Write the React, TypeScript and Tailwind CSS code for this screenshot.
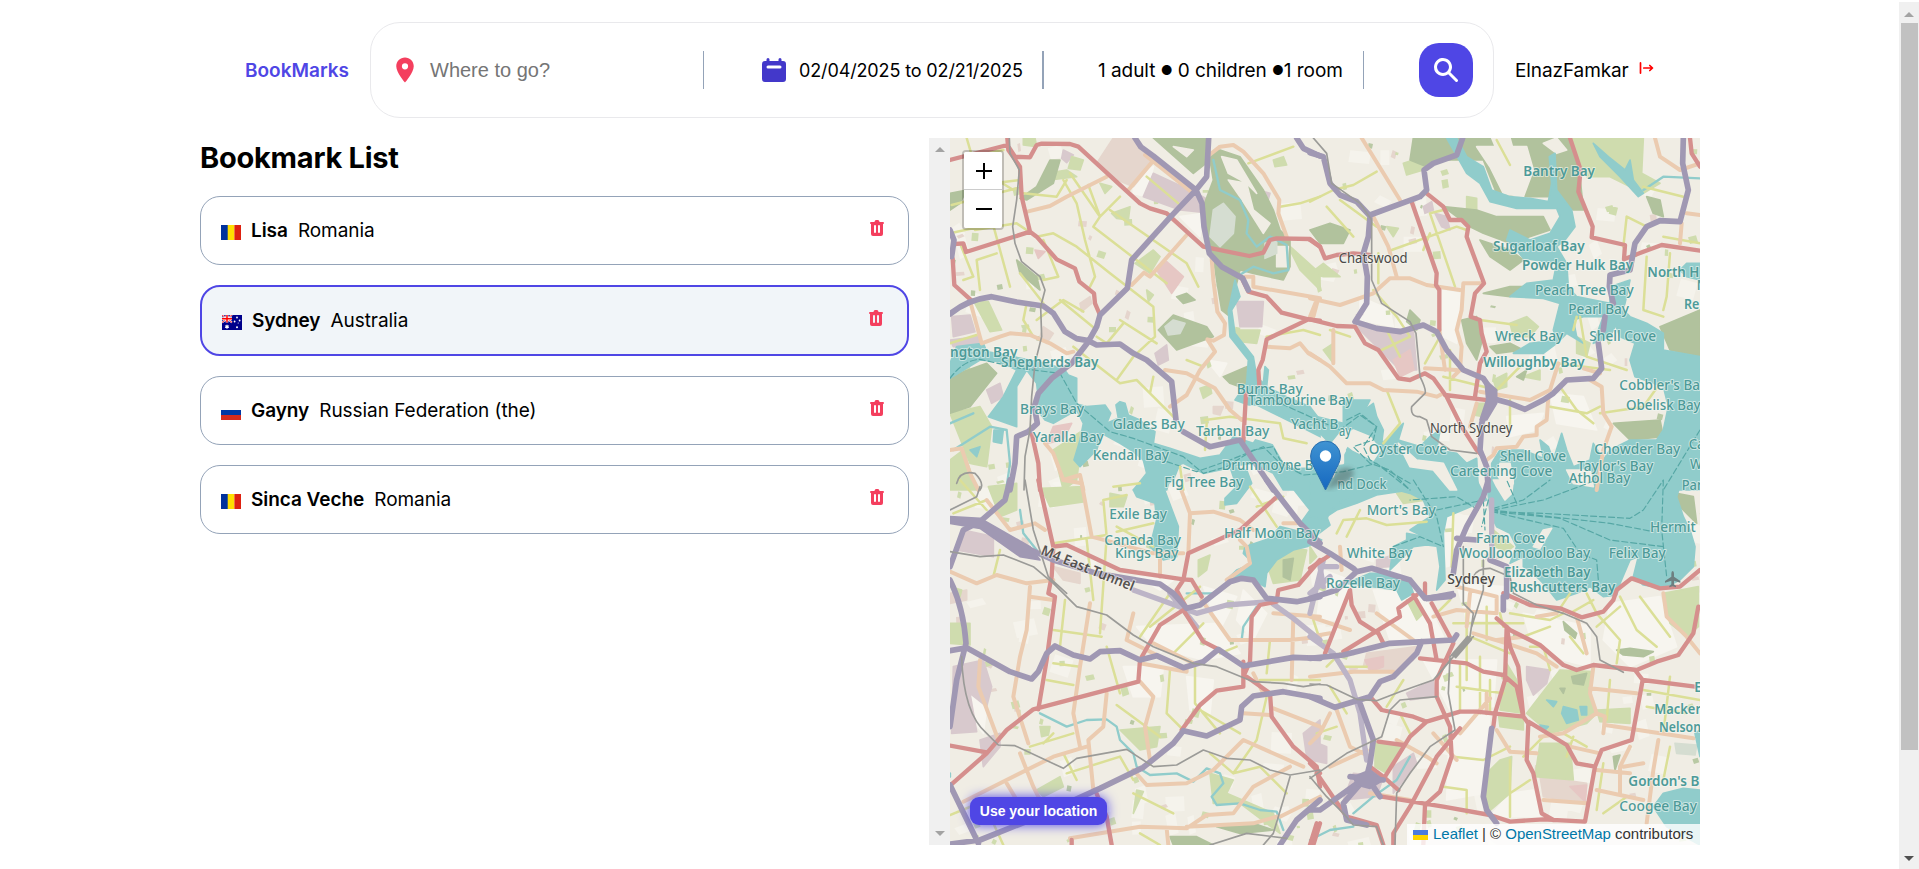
import React from "react";
import { HiCalendar, HiSearch, HiTrash } from "react-icons/hi";
import { MdLocationOn } from "react-icons/md";

type Quad = "a" | "b" | "c" | "d" | "e";
type Shape = [Quad, string];

/* Map sheets: every shape is stored relative to the origin of its sheet. */
const ORIGIN: Record<Quad, [number, number]> = {
  a: [0, 0],
  b: [1170, 0],
  c: [0, 1050],
  d: [1170, 1050],
  e: [630, 810],
};

const INDUSTRIAL: Shape[] = [
  ["a", "M670 200L700 130L830 190L900 230L880 250L780 240ZM95 560L150 555L165 605L100 620ZM950 515L1030 515L1025 590L960 590ZM885 350L970 380L940 410L880 390ZM430 60L460 75L440 98L425 85ZM1015 180L1050 190L1040 225L1010 215ZM705 670L740 645L745 690L715 705ZM90 630L175 620L180 650L100 650ZM200 780L240 760L250 800L215 820Z"],
  ["b", "M140 590L310 600L320 720L270 720L210 660ZM375 250L410 260L420 300L395 290ZM340 230L365 215L370 240L345 250Z"],
  ["c", "M130 150L220 170L220 230L110 210ZM100 560L190 540L215 620L200 680L150 640L170 755L95 760ZM180 780L240 760L240 800L190 860ZM1150 760L1200 720L1200 840L1160 830Z"],
  ["d", "M650 560L720 570L710 610L670 645L650 600ZM250 860L310 820L320 850L250 940ZM0 780L50 800L50 850L0 840ZM290 640L370 600L375 650L300 660ZM200 240L250 225L240 260L200 262ZM130 880L220 890L200 950L100 960Z"],
];
const RETAIL: Shape[] = [
  ["a", "M530 100L580 24L650 24L700 95L640 170L570 140ZM370 590L400 610L380 640L360 620ZM480 520L510 500L515 520L485 545ZM880 830L910 830L900 855L880 850Z"],
  ["d", "M690 890L830 910L825 970L700 950ZM170 520L320 500L310 540L250 580L160 560ZM700 150L725 150L700 200L680 190Z"],
  ["c", "M90 340L140 330L140 360L90 370ZM400 260L480 280L480 310L430 300Z"],
];
const PINK: Shape[] = [
  ["a", "M710 420L740 395L790 440L755 490ZM345 360L375 365L355 385ZM400 890L455 880L430 930L380 940Z"],
  ["b", "M250 690L300 660L312 720L270 740Z"],
  ["d", "M165 540L220 530L220 560L180 575ZM780 920L830 915L825 965Z"],
];
const PARK: Shape[] = [
  ["a", "M160 512L205 515L245 600L210 605ZM645 400L700 360L720 380L690 430ZM575 250L630 230L625 270L590 265ZM310 24L345 24L350 50L310 45ZM455 80L490 90L480 120L445 115ZM840 775L870 765L875 790L850 805ZM1060 90L1090 80L1100 105L1065 110ZM90 990L130 960L170 1080L90 1080ZM90 850L180 830L215 890L200 1010L150 1000ZM380 130L440 120L470 140L390 150ZM940 600L1020 600L1010 640L960 635ZM400 960L490 900L470 1050L430 1080ZM540 160L575 170L555 190ZM680 480L700 495L685 515ZM1100 340L1200 430L1200 480L1140 420Z"],
  ["b", "M780 24L1000 24L995 130L1050 160L1000 190L900 140L830 140ZM280 100L340 80L340 120L290 135ZM470 200L500 205L500 240L470 240ZM600 580L650 560L685 590L660 620L610 620ZM800 620L840 640L830 680L800 670ZM550 750L590 730L590 770L560 780ZM500 820L530 820L520 860L490 855ZM0 430L40 400L90 440L40 440ZM40 660L70 640L70 700ZM230 290L265 295L250 320ZM640 740L690 720L690 750Z"],
  ["c", "M365 25L490 20L495 65L390 80ZM1040 250L1090 200L1160 210L1140 300L1060 310ZM600 750L720 740L710 800L660 810ZM870 880L940 900L920 940L1060 1000L1080 1060L960 970L880 970ZM205 20L290 10L290 90L240 110ZM90 430L150 430L150 495L90 490ZM570 40L620 50L610 80L570 80ZM835 240L870 225L860 270L835 290ZM90 320L125 330L120 350ZM360 740L390 740L385 765L365 770ZM650 930L670 935L640 1000ZM350 930L420 890L430 920L370 950Z"],
  ["d", "M750 570L850 575L840 640L860 700L830 730L720 760L650 700ZM590 550L620 600L640 700L570 690ZM690 790L780 790L790 900L675 890ZM570 840L605 830L600 940L530 1000L530 880ZM1060 340L1165 320L1165 440L1130 470L1080 430ZM860 690L960 685L960 730L870 725ZM195 790L280 790L230 880L195 860ZM565 700L640 710L640 750L570 740ZM550 150L610 200L590 215L555 200ZM290 360L320 355L340 400L320 420ZM880 10L910 10L905 80L885 60ZM900 0L920 0L905 40ZM260 40L350 20L350 60L280 70ZM0 200L20 230L0 250Z"],
];
const FOREST: Shape[] = [
  ["a", "M700 24L860 24L860 75L900 60L960 80L1030 180L1060 240L1080 300L1110 330L1110 410L1090 450L1000 430L960 420L940 500L930 560L905 540L890 450L880 380L860 300L850 230L880 150L870 90L820 130ZM715 600L760 555L860 590L880 620L770 660ZM910 740L980 710L985 780L930 760ZM90 740L200 700L230 730L150 830L90 850ZM390 90L420 90L400 160L320 210L300 205L350 170ZM770 500L800 490L825 510L790 520ZM90 190L140 180L120 220L90 240ZM290 390L350 440L360 480L300 430Z"],
  ["b", "M310 24L780 24L810 140L820 240L790 240L740 200L660 200L560 190L520 90L400 90L350 110L300 90ZM400 230L500 240L560 260L700 260L720 300L600 340L520 310L480 290ZM510 330L600 360L640 390L600 420L540 380ZM455 570L500 560L520 620L500 690L470 640ZM520 490L600 470L640 470L600 500ZM1050 590L1170 540L1170 680L1080 660ZM0 300L60 280L120 300L100 340L30 340ZM910 880L1050 870L1060 920L960 930ZM1010 200L1050 210L1060 260L1030 250ZM300 540L330 570L320 600L290 575ZM540 650L600 640L640 660L560 670ZM620 740L650 720L640 750Z"],
  ["c", "M750 1070L830 1070L880 1095L760 1095ZM890 1040L1000 1030L1060 1050L960 1060ZM1090 240L1120 235L1110 300L1090 290Z"],
  ["d", "M920 510L960 505L1030 515L1000 530L940 525ZM785 590L830 580L820 615L790 610ZM750 625L765 625L760 640ZM760 425L800 460L795 475L765 450ZM910 830L930 825L915 870ZM1100 40L1150 50L1160 130L1110 80Z"],
];
const CLEARING: Shape[] = [
  ["a", "M925 150L980 160L1000 240L1050 280L1030 310L960 200ZM1070 350L1105 350L1100 410L1070 410ZM760 50L820 60L800 80ZM905 80L950 90L1010 190L980 160L925 130Z"],
  ["b", "M500 50L650 50L670 120L640 200L580 190L540 110ZM545 24L600 24L610 60L560 60ZM700 40L740 24L770 60L740 70Z"],
];
const PITCH: Shape[] = [
  ["a", "M880 240L910 220L945 260L940 310L900 350L870 320ZM735 590L760 570L795 580L780 610L745 615ZM1035 340L1070 330L1070 370L1035 385Z"],
  ["d", "M1095 790L1160 795L1155 825L1100 820Z"],
];
const PALE: Shape[] = [
  ["a", "M640 150L700 110L680 200L640 190ZM780 260L850 250L840 320ZM860 690L920 700L900 740ZM180 720L230 730L160 820L150 760Z"],
  ["c", "M400 10L460 0L440 40ZM650 290L760 300L720 330ZM850 320L950 350L900 450ZM120 540L200 680L190 760L140 700ZM800 590L880 600L870 700L810 690ZM970 330L1040 400L1000 480L950 420ZM650 440L900 430L960 520L850 540L700 500ZM610 560L730 560L720 650L640 650Z"],
  ["d", "M400 120L430 90L440 250L410 260ZM340 540L560 540L550 680L420 690ZM420 700L540 700L520 940L410 960ZM190 330L340 340L400 470L240 480ZM440 310L580 320L560 420L470 420ZM640 400L840 440L840 560L760 540L660 470ZM900 370L1050 350L1100 500L960 560L880 480ZM40 270L120 300L90 420L20 420ZM670 930L690 1010L540 1010L600 940Z"],
  ["b", "M390 480L450 490L440 640L400 620ZM590 860L700 850L680 900L600 920ZM720 790L820 800L860 900L740 880ZM150 500L240 540L250 590L150 570Z"],
];

const WATER: Shape[] = [
  ["a", "M90 700L110 650L190 640L200 665L330 690L430 715L445 735L470 745L470 822L500 830L555 825L572 850L560 880L595 865L588 825L600 815L615 820L625 855L660 870L680 890L705 905L700 940L750 955L840 985L900 975L940 920L1000 940L1020 910L1060 900L1110 950L1140 1000L1200 1010L1200 1080L1090 1080L1060 1030L1000 1000L960 1005L900 1020L850 1030L790 1000L760 1010L740 1080L640 1080L680 1030L670 990L640 965L600 940L545 910L530 960L480 1010L462 990L480 930L490 880L470 840L400 880L375 870L360 850L350 760L320 720L290 770L290 890L205 860L250 800L290 720L240 695L180 690L90 745Z"],
  ["a", "M930 520L945 450L960 500L935 540L945 610L1000 680L1010 740L1030 760L1035 710L1045 720L1040 770L1100 800L1170 830L1200 870L1200 930L1150 930L1120 890L1080 860L1000 830L945 810L980 760L985 690L930 620L925 540Z"],
  ["a", "M222 900L250 900L245 940L220 935ZM150 960L180 950L170 980Z"],
  ["e", "M300 200L350 210L365 250L320 310L285 315L285 295L320 260Z"],
  ["e", "M60 190L110 200L150 190L130 240L100 260L130 340L145 380L140 470L100 480L60 440L80 360L75 310L20 290L10 270L50 240Z"],
  ["e", "M345 440L420 415L450 380L530 400L575 420L530 440L490 450L440 480L410 520L405 560L370 540L300 530L320 510L370 490L340 460Z"],
  ["e", "M450 190L480 215L550 210L620 240L700 200L760 220L840 240L840 270L740 285L680 310L620 330L590 350L600 375L560 405L520 400L515 365L540 330L500 280L470 240Z"],
  ["e", "M640 0L720 0L700 40L740 60L745 100L720 140L740 180L840 200L840 270L640 215L670 190L650 150L680 100L640 80L600 130L560 90L490 60L440 35L460 10L560 50L640 70Z"],
  ["b", "M110 860L150 850L190 820L200 860L220 900L215 940L260 900L280 880L265 930L330 950L360 920L390 900L380 960L440 970L470 1000L500 985L505 1080L60 1080L90 1000L130 930Z"],
  ["b", "M545 1000L570 960L640 960L700 985L690 930L715 950L730 990L755 910L770 960L790 1010L840 990L850 940L880 990L900 960L960 930L1040 930L1060 900L1075 830L1060 770L975 740L960 690L975 640L930 620L910 570L930 530L960 560L1010 580L1060 610L1060 660L1170 680L1170 1080L545 1080Z"],
  ["b", "M410 24L440 24L470 80L520 110L545 180L600 200L660 205L715 215L725 160L718 80L735 70L740 180L785 240L795 290L765 330L740 350L770 400L775 470L800 500L900 520L900 470L960 450L945 520L930 560L900 620L850 640L880 560L820 560L790 570L800 620L820 640L770 610L740 640L700 670L610 670L660 640L740 630L730 600L750 520L700 505L600 500L650 460L730 450L740 400L640 385L620 360L590 330L600 300L660 330L720 310L750 260L740 235L620 235L540 215L510 160L470 130Z"],
  ["b", "M850 40L895 80L945 120L960 90L970 150L1000 190L985 200L930 140L870 80ZM1110 420L1130 400L1170 400L1170 450L1130 440Z"],
  ["d", "M0 0L500 0L530 60L410 110L400 160L405 300L380 330L390 260L380 190L300 150L360 110L340 60L300 40L190 10L130 40L60 90L50 120L0 110Z"],
  ["d", "M240 270L250 200L290 180L290 160L340 170L390 200L350 195L310 200L260 250ZM110 310L180 280L230 280L300 310L310 340L275 360L260 330Z"],
  ["d", "M530 0L1115 0L1100 50L1120 110L1140 150L1155 200L1150 260L1110 300L1060 325L1000 315L970 290L985 230L960 240L930 310L920 345L880 350L840 320L800 340L740 360L700 310L670 280L640 260L640 230L600 250L620 200L600 160L560 140L540 100Z"],
  ["d", "M1170 930L1120 925L1060 940L1030 980L1070 1040L1170 1095ZM1155 760L1170 750L1170 830ZM760 680L800 690L805 720L770 730L755 700ZM810 680L830 680L830 705L815 705ZM710 660L740 665L730 680ZM690 735L715 740L700 755Z"],
];
const LAND: Shape[] = [
  ["e", "M320 20L380 20L480 70L560 110L640 150L640 190L560 200L470 200L430 130L360 110L340 70Z"],
  ["b", "M90 930L130 900L180 920L210 960L190 990L130 960ZM265 940L320 990L400 1000L440 1080L420 1080L370 1020L300 1010ZM570 1000L600 1000L610 1060L590 1080L565 1040ZM770 1020L840 1020L850 1070L790 1060Z"],
  ["d", "M550 0L610 0L605 40L585 60L560 20ZM700 150L725 145L690 205L670 200Z"],
];
const CREEK: Shape[] = [
  ["c", "M360 700L440 740L500 720L560 718L590 740L600 780L640 820L650 860L690 885L770 880L820 905L860 865L900 880L910 910L875 950L890 975L960 970L1020 990L1070 995L1090 1050"],
  ["a", "M880 90L900 180L960 210L985 270L980 310L1010 350L1050 320L1100 345L1105 420L1060 430L1000 410L950 440"],
  ["c", "M1010 380L970 440L965 480M300 90L310 160L350 210M800 340L880 340M90 880L90 890"],
  ["b", "M1000 180L1060 140L1170 145"],
  ["d", "M300 830L260 900L190 950L130 1000M0 1080L60 1050L130 1040"],
  ["a", "M90 880L160 850M100 960L210 890L260 900L270 1000L260 1070"],
];

const YELLOW: Shape[] = [
  ["a", "M95 225L290 175M140 24L165 110L200 180M430 150L470 220L495 330L525 440L510 470M450 130L540 260L600 200M505 165L540 260L520 290L740 460M570 240L800 400L835 470M130 80L250 60M165 300L290 280L350 320L400 310L470 350L570 430L700 530L705 620L640 680L590 750M240 80L215 140L280 180M210 250L270 470M370 330L415 440L370 450M300 430L370 520M90 310L180 290M120 340L160 440L130 450M180 480L170 390L230 370M420 510L530 600M350 570L430 510L490 545M610 580L560 640L530 620M600 570L710 640M460 650L600 760L650 750L700 800L770 870M800 690L850 710M855 870L930 860L1080 880L1090 925L1160 940M860 880L855 960M700 740L690 790M680 140L775 220M310 190L410 200L440 150M220 160L300 150M1080 230L1140 220L1200 200M90 640L170 615M320 520L310 570L340 620M1040 620L1150 600L1200 615M985 100L1120 50M780 1010L790 1080M580 1070L660 1060"],
  ["b", "M0 215L70 180L130 165L200 125M360 250L435 470M245 360L440 290L470 300M205 370L205 460M190 480L260 560L300 620M950 260L940 350M950 260L1010 290M1080 370L1070 500L1060 540M1010 380L1000 540L1060 560M560 30L600 105M510 570L620 585M400 740L560 780M420 660L420 780M720 830L830 850L870 830M750 770L800 840L850 880M230 780L270 880L220 940M1000 170L1120 200M1060 320L1170 340M640 700L560 780M810 560L830 680L950 720M360 250L400 240M90 210L200 290M50 230L130 320M215 660L300 620M230 600L270 680M740 700L900 720M600 810L600 900M870 850L1000 830L1050 760M345 700L390 620M120 620L60 600M800 560L790 600M360 310L340 360"],
  ["c", "M400 450L545 470M435 360L420 500M400 190L560 165M550 60L560 170L540 460M500 180L520 360M750 340L660 470M590 140L700 200M330 800L460 760M440 880L600 830M560 500L600 640M380 600L460 615M590 675L720 770M750 570L740 700L790 750M825 560L825 670L900 760M640 940L760 1000M430 820L470 900M900 520L950 500M1050 480L1040 580M250 1095L220 1030M90 1005L200 960M840 320L690 440M1020 600L1200 600M1010 780L940 880M600 830L640 900M100 100L200 60M850 430L760 520M550 60L620 45M590 155L700 130M240 210L220 290M120 0L200 90M400 550L480 560M370 790L400 760M990 20L1070 140M1010 80L1090 50M1040 650L1010 780M840 690L960 760M870 820L940 880L1020 860L1100 940M660 1060L720 1095M1180 420L1200 480"],
  ["d", "M80 160L100 120L170 115L230 135L350 125M110 170L150 90M470 400L470 600M430 430L640 430M510 530L510 700M440 620L580 640M600 400L720 420L760 400M720 440L640 470M930 350L980 450L1040 500M990 350L1080 470M860 400L930 480L920 550M1080 590L1060 760M900 600L890 720M400 920L470 930L470 1000M430 830L520 840L600 800M660 900L600 940M880 850L860 990M950 950L880 1000M720 570L700 500L660 500M780 470L820 520M540 600L540 700M380 400L420 360M430 100L425 260M780 340L740 400M830 340L860 400M280 600L230 680M100 560L170 560M760 760L830 800M930 380L860 440M700 770L640 830M270 700L300 760M1000 630L1170 660M1010 680L1130 700M600 840L600 1010M450 550L450 690M480 470L600 520M530 380L530 480M50 560L90 520M60 620L110 700M790 770L770 830M1080 800L1060 900M20 760L80 740M570 400L580 440M850 360L780 400"],
];
const ORANGE: Shape[] = [
  ["a", "M322 245L390 228L440 200L560 140M700 92L625 180M675 75L820 190M800 315L690 440L672 428L635 465M875 385L880 450L892 545L915 580L912 615L880 632L862 628L885 665L840 720L800 795L750 830M735 720L800 730L885 775L930 840L965 870M868 75L900 50L940 45L970 65L1030 130L1078 210L1075 250L1100 320M975 440L1000 440L1000 470L1200 505M1195 505L1180 560M1040 650L1110 655L1140 640L1165 670L1200 690M150 512L185 640L240 620L270 610L330 615L390 640L440 670L460 665M375 940L400 970L430 1050L480 1035L490 1080M90 960L125 955L150 1030L175 1080"],
  ["b", "M155 24L270 210M190 260L235 350L260 440M0 505L90 525L190 490L240 445L300 445L350 465L450 480M520 460L460 460L455 540L440 600L455 650L450 720L430 740M0 670L60 710L110 760L180 760L220 780L320 785L380 800L400 790M70 600L70 700M388 600L405 720M345 715L440 720M510 785L600 800L660 810L720 780L745 700M840 750L875 770L880 850L905 890L880 960L860 1080M715 800L710 870L680 890L680 915L640 920L620 950L560 955L550 975L530 990M1035 24L1050 80L1110 120L1170 100M1110 340L1115 280M1130 250L1170 255M500 820L480 890M820 715L870 730M20 510L0 560"],
  ["c", "M200 60L270 150L345 130L375 150M90 275L170 310L230 285L320 310L400 300M330 320L320 450L300 530L280 650L325 790M430 0L485 10L515 170L700 220L790 220M780 20L810 100L805 220M810 100L880 95L960 120L1000 150M960 180L980 200L990 250L920 300M845 360L930 480L1110 480L1200 470M510 370L480 560L460 700L480 800M560 640L550 740L505 780L520 930M660 605L700 650L675 740L690 840M300 820L340 920L380 1000M130 965L400 830L500 800M180 540L175 620L235 780M640 870L680 915L800 910L880 870L970 780L1150 860M450 1075L660 1040L800 1045L860 1005L940 1000L1000 920L1110 860M740 1045L745 1095M1060 685L1200 740M970 700L1050 705M1120 410L1115 600M1060 400L1200 410M620 480L800 570M660 550L800 575M700 490L820 550M1090 130L1130 130M800 1040L1000 1030L1070 1010M260 910L290 960M720 210L720 290M400 360L330 350M620 480L640 400M1000 580L1030 640M1080 1010L1200 950"],
  ["d", "M0 410L120 450M0 470L60 460M0 590L130 575L250 575M370 410L440 390L560 400M440 320L560 350M480 340L470 440M490 460L590 490L680 520L740 560M200 400L310 480M560 750L600 815L680 820M850 560L840 640L860 700L885 710L880 760M840 625L980 640M860 700L760 760L690 770M885 735L1150 775M1060 340L1070 410L1130 470L1170 520M1045 780L1030 870L1010 1030M960 800L930 860L930 940M860 870L960 880M860 930L1000 960M700 960L830 970M450 760L540 655M370 760L440 840M90 200L95 270M680 410L740 400M800 410L830 520M780 800L870 820M260 780L350 830L380 850M60 700L30 760L0 790M80 690L120 800L180 830M180 940L300 960M60 860L170 810M560 350L560 400M640 470L560 480M1000 850L940 860M530 640L530 700"],
];
const RED: Shape[] = [
  ["a", "M90 90L262 45L285 80L330 82L350 45L365 41L450 42L475 50L660 220L690 235L740 250L850 350L988 378L1030 368L1050 330L1070 325L1170 327L1200 350M262 24L265 60L300 110L305 200L330 305L138 366L130 340L105 342M330 305L350 320L410 388L465 415L478 455L522 490L525 520L540 555M98 385L103 465L155 512M968 450L985 485L1040 500L1085 548L1165 568L1200 572M1165 568L1040 628L1028 690L1015 720L1018 765M978 790L970 935M335 910L355 1000L360 1080"],
  ["b", "M0 330L30 350L45 385L80 375L130 370L180 375M0 568L80 588L135 590L165 640L205 660L265 745L300 750L345 730L370 745L410 800L455 890L500 960L520 980M305 215L380 430L378 465L388 480L388 600M350 190L400 230L420 270L455 270L475 290L470 320L522 460L495 490L482 560L510 570L515 610L530 665L510 700L495 800M405 795L545 812M780 24L812 120L805 185L848 290L845 322L945 345L942 388L1000 365L1055 345L1170 362M1140 24L1145 70L1170 110"],
  ["c", "M355 0L400 200L440 195L600 270L790 298L815 300L845 350M400 200L395 290L385 340L405 350L380 540L355 688M90 917L200 820L260 750L340 688L655 605L660 540L720 435L790 390L850 485L890 505M90 797L200 817M790 300L805 220L960 150L1065 55M790 300L770 330L800 385M1200 240L1135 315L1075 330L1070 365L1020 375L995 410L990 545L970 590M970 545L970 620L890 632L840 675L785 750M980 590L1050 640L1055 710L1120 800L1190 860L1200 920M525 930L560 1010L575 1095M1200 1030L1180 1095M455 1080L455 1095"],
  ["d", "M0 265L60 225M120 330L45 520M120 330L125 375L150 425L205 460L220 490M100 515L270 410L265 385L320 345M310 345L360 430L380 540M345 310L345 345M365 370L430 490L380 600L380 650L420 740L425 830L390 935L345 975L340 1095M330 535L470 550L520 575L580 585L620 620L640 710M580 340L660 375L750 385L815 412L880 395L910 360L920 330L965 295L1050 325L1110 320L1170 270M560 415L600 450L690 495L760 555L800 570L850 555L980 570L1040 545L1105 525L1150 460L1165 380M590 440L585 600L555 700L550 740M590 440L600 500L625 560L640 710L655 730L650 840L670 880L695 1000L730 1020M640 710L500 695L450 695L350 725L310 710L215 690L185 655M350 725L300 770L225 890M655 725L770 795L800 850L855 860L875 810L965 780L998 600L1155 620M975 570L998 600M855 860L825 1025L700 1018L600 1025L540 1005L400 980L215 950M205 785L280 795M180 860L220 890L265 930M450 745L380 830L300 980L250 1060L250 1095M0 850L30 880M20 880L110 1010L200 1035L220 1095M0 1095L20 1030"],
];
const TUNNEL: Shape[] = [
  ["c", "M640 330L750 370L830 400L920 375L1050 365L1120 415L1200 480M750 340L830 440"],
  ["d", "M0 400L40 240M0 340L60 290M0 470L70 520L120 600L150 700L170 840M545 60L545 230"],
  ["e", "M580 560L570 500L620 500"],
];
const PURPLE: Shape[] = [
  ["a", "M645 24L662 50L700 78L828 180L750 262L635 390L622 475L540 555L530 590L505 635L455 700L395 745L355 790L343 830L352 880L325 905L290 920L285 1000L270 1080M866 24L860 140L828 180L846 220L852 290L868 370L905 410L968 445L985 480M90 552Q140 510 215 500L290 516L370 528L400 550L435 605L470 626L505 632L530 645L600 642L640 670L680 690L755 755L768 870M790 905L870 950L960 930L1000 990L1060 1080M1130 24L1150 55L1200 78M90 300L102 330L95 380"],
  ["b", "M0 68L40 80L60 160L90 195L140 215L180 258L175 320L160 370L172 440L170 520L135 575L200 595L270 605L340 585L380 605L410 660L460 720L520 745L550 790L530 840L515 880L510 960L530 1010L535 1080M180 255L330 200L350 180L342 120L370 100L440 75L458 24M545 805L600 820L645 838L700 810L730 790L770 750L850 745L875 715L865 640M880 600L885 560M910 520L898 470L900 435L960 420L975 340L1010 290L1050 272L1110 275L1135 180L1118 100L1120 24"],
  ["c", "M90 120L180 125L300 195L400 240L530 280L720 312L760 340L800 385L840 375L930 305L965 295L1000 300L1040 355L1130 365L1200 350M270 0L255 60L180 125L130 150L90 260M90 300Q130 380 138 490L110 600L90 740M90 512L140 503L270 575L335 597L355 575L380 520L405 498L460 525L510 537L540 515L600 512L660 540L710 527L790 563L850 545L895 508L970 558L1120 532L1200 535M90 1092L180 1080L330 1020L540 925L670 862L760 790L790 752L860 768L960 720L965 680L1000 648L1090 635L1200 655M90 915L175 1090M1040 0L1140 130L1200 190M1200 960L1130 1020L1080 1095"],
  ["d", "M0 185L60 220L130 265L140 275L185 265L300 300L345 355L430 345M430 280L440 210L470 140L520 50L535 0M440 175L500 180M540 240L590 260L590 350M580 350L580 390M0 355L80 330L140 275M0 535L100 525L240 490L430 480L440 465M335 485L320 520L250 590L210 605L180 650L75 682L0 650M150 670L190 780L180 850L170 890L30 990L0 990M170 890L100 970L110 1020L170 1035M120 890L220 900M170 890L210 950M545 745L520 950L530 990L560 1030"],
];
const HUBS: Shape[] = [
  ["c", "M90 110L180 115L330 200L360 240L300 230L180 145L90 130Z"],
  ["d", "M130 890L180 870L220 900L180 925L140 915ZM325 330L350 350L430 335L425 355L350 362Z"],
  ["b", "M525 750L560 780L560 820L530 870L510 870L530 810Z"],
];
const RAIL: Shape[] = [
  ["a", "M268 24L270 70L298 120L290 210L278 290L285 340L305 395L360 440L375 480L362 530L365 620L345 700L335 800L330 900L315 980L312 1080M110 1060Q120 1020 165 1030Q195 1060 180 1080"],
  ["b", "M10 24L50 70L65 160L150 220L185 270L185 450L215 520L300 575L318 610L330 740Q350 780 345 790L305 830Q300 860 330 860L350 870L365 920L420 960L500 970"],
  ["c", "M90 215L180 230L250 225L340 260L400 310L470 380L560 405L640 465L700 500L820 550L890 560L1000 605L1090 610L1150 620L1200 612M315 0L340 150L385 290L440 340M125 530Q130 700 200 760L235 795L285 797L430 865L470 835L620 808L700 860L770 855L850 810L920 835L990 840L1050 870L1110 885L1200 870M870 1095L980 1060L1100 1075M1110 890L1090 960L1060 1060L1030 1095M90 90L170 50L180 20"],
  ["d", "M0 612L50 615L140 658L200 662L270 635L370 600L430 530L480 470L490 400L460 370L460 200M490 470L420 530L415 640L435 750L360 800L300 880L260 940L255 1095M380 590L480 470M380 650L270 660L240 690L215 770L110 820L0 895M485 440L520 330L520 240M490 290Q500 265 540 265L600 290L610 340L680 375L760 400L830 430L860 470L870 540L940 577M0 890L50 950L100 1000L130 1035L200 1040L220 1095"],
];
const FERRY: Shape[] = [
  ["a", "M90 745Q130 690 180 688L300 715L420 730L470 820L570 905L640 925L790 980L850 1030L920 1010L1000 960L1060 950L1080 990L1140 1030"],
  ["e", "M110 185L200 215L300 180L400 140L450 190L520 225L640 215L740 190L840 270M430 0L540 50L630 90L690 45L740 80L700 140L720 180L840 250"],
  ["b", "M1170 900L1060 1080M110 870L150 850L200 890L190 930L130 950L180 1000L240 1020L300 1080"],
  ["d", "M545 95L700 100L960 115L1000 90L1060 0M545 95L750 115L900 180L1060 200M545 95L760 145L810 220L860 240L865 300M1060 0L1055 150L1070 290M550 90L700 60L860 0M380 90L520 60M310 0L380 110L400 200M250 200L330 170L400 200M550 85L640 60L720 0M520 60L525 150M535 60L515 140M505 90L440 50L300 60M545 90L900 130L1030 155M620 70L590 0"],
];

type Label = [Quad, number, number, number, string, number?];
const WATER_LABELS: Label[] = [
  ["a", 90, 680, 202, "ngton Bay", 600],
  ["a", 243, 711, 292, "Shepherds Bay", 600],
  ["a", 300, 852, 192, "Brays Bay"],
  ["a", 338, 935, 213, "Yaralla Bay"],
  ["a", 578, 896, 216, "Glades Bay"],
  ["a", 518, 991, 229, "Kendall Bay"],
  ["a", 828, 917, 220, "Tarban Bay"],
  ["a", 950, 792, 198, "Burns Bay"],
  ["a", 985, 825, 313, "Tambourine Bay"],
  ["e", 275, 210, 275, "Drummoyne B", 500],
  ["e", 483, 87, 142, "Yacht B", 500],
  ["e", 627, 108, 36, "ay", 500],
  ["a", 733, 1072, 237, "Fig Tree Bay"],
  ["b", 176, 972, 235, "Oyster Cove"],
  ["e", 622, 268, 148, "nd Dock", 500],
  ["d", 170, 105, 207, "Mort's Bay"],
  ["d", 110, 235, 197, "White Bay"],
  ["d", 48, 323, 222, "Rozelle Bay"],
  ["c", 568, 117, 173, "Exile Bay"],
  ["c", 553, 194, 230, "Canada Bay"],
  ["c", 585, 235, 190, "Kings Bay"],
  ["c", 912, 173, 287, "Half Moon Bay"],
  ["b", 640, 139, 215, "Bantry Bay", 600],
  ["b", 549, 363, 275, "Sugarloaf Bay", 600],
  ["b", 636, 421, 333, "Powder Hulk Bay", 600],
  ["b", 675, 495, 296, "Peach Tree Bay"],
  ["b", 775, 552, 182, "Pearl Bay"],
  ["b", 1012, 442, 156, "North H", 600],
  ["b", 1160, 480, 30, "N", 600],
  ["b", 1122, 536, 46, "Re", 600],
  ["b", 555, 633, 205, "Wreck Bay"],
  ["b", 838, 634, 200, "Shell Cove"],
  ["b", 520, 712, 304, "Willoughby Bay", 600],
  ["b", 928, 779, 242, "Cobbler's Ba"],
  ["b", 948, 841, 224, "Obelisk Bay"],
  ["b", 853, 972, 258, "Chowder Bay"],
  ["b", 570, 994, 198, "Shell Cove"],
  ["b", 420, 1038, 307, "Careening Cove"],
  ["b", 802, 1024, 228, "Taylor's Bay"],
  ["b", 776, 1060, 185, "Athol Bay"],
  ["b", 1136, 958, 48, "Ca", 500],
  ["b", 1140, 1017, 36, "W", 500],
  ["b", 1115, 1079, 62, "Par"],
  ["d", 498, 189, 207, "Farm Cove", 500],
  ["d", 448, 235, 393, "Woolloomooloo Bay"],
  ["d", 896, 235, 171, "Felix Bay"],
  ["d", 1020, 157, 137, "Hermit"],
  ["d", 582, 292, 260, "Elizabeth Bay", 600],
  ["d", 598, 335, 318, "Rushcutters Bay", 600],
  ["d", 1153, 635, 22, "E", 600],
  ["d", 1033, 703, 140, "Macker", 600],
  ["d", 1047, 756, 126, "Nelson", 600],
  ["d", 955, 917, 213, "Gordon's B", 600],
  ["d", 928, 992, 233, "Coogee Bay"],
];
const PLACE_LABELS: Label[] = [
  ["b", 86, 399, 207, "Chatswood", 400],
  ["b", 360, 908, 247, "North Sydney", 400],
  ["d", 412, 311, 143, "Sydney", 500],
];

function Areas({ shapes, fill }: { shapes: Shape[]; fill: string }) {
  return (
    <g fill={fill} stroke={fill} strokeWidth={5} strokeLinejoin="round">
      {shapes.map(([q, d], i) => (
        <path key={i} d={d} transform={`translate(${ORIGIN[q][0]} ${ORIGIN[q][1]})`} />
      ))}
    </g>
  );
}

function Lines({ shapes, color, width, dash }: { shapes: Shape[]; color: string; width: number; dash?: string }) {
  return (
    <g fill="none" stroke={color} strokeWidth={width} strokeLinejoin="round" strokeLinecap="round" strokeDasharray={dash}>
      {shapes.map(([q, d], i) => (
        <path key={i} d={d} transform={`translate(${ORIGIN[q][0]} ${ORIGIN[q][1]})`} />
      ))}
    </g>
  );
}

/* Small green, beige and pale lots spread over the land in a fixed pattern. */
function scatter(count: number, seed: number, size: number): string {
  let s = seed;
  const next = () => {
    s = (s * 16807) % 2147483647;
    return s / 2147483647;
  };
  let d = "";
  for (let i = 0; i < count; i++) {
    const x = 90 + next() * 2250;
    const y = 24 + next() * 2121;
    const w = size * (0.4 + next());
    const h = size * (0.4 + next());
    const k = (next() - 0.5) * size * 0.8;
    d += `M${x.toFixed(0)} ${y.toFixed(0)}l${w.toFixed(0)} ${k.toFixed(0)}l${(-k).toFixed(0)} ${h.toFixed(0)}l${(-w).toFixed(0)} ${(-k).toFixed(0)}Z`;
  }
  return d;
}

function Labels({ items, color, size }: { items: Label[]; color: string; size: number }) {
  return (
    <g fill={color} stroke="#f4f8f4" strokeOpacity={0.6} strokeWidth={6} paintOrder="stroke" strokeLinejoin="round" fontSize={size}>
      {items.map(([q, x, y, w, t, weight], i) => (
        <text key={i} x={ORIGIN[q][0] + x} y={ORIGIN[q][1] + y} textLength={w} lengthAdjust="spacingAndGlyphs" fontWeight={weight ?? 500}>
          {t}
        </text>
      ))}
    </g>
  );
}

function CityMap() {
  return (
    <svg viewBox="90 24 2250 2121" className="block h-[707px] w-[750px] font-['Noto_Sans',sans-serif]">
      <rect x="90" y="24" width="2250" height="2121" fill="#f0ede4" />
      <path d={scatter(150, 77, 46)} fill="#f5f3ec" />
      <Areas shapes={PALE} fill="#f7f5ef" />
      <path d={scatter(60, 991, 18)} fill="#e5d5cd" />
      <path d={scatter(150, 4242, 18)} fill="#cfdcae" />
      <path d={scatter(40, 313, 13)} fill="#b9c9a4" />
      <Areas shapes={INDUSTRIAL} fill="#d8c9cd" />
      <Areas shapes={RETAIL} fill="#e5d6cd" />
      <Areas shapes={PINK} fill="#e6c7c4" />
      <Areas shapes={PARK} fill="#cfdcae" />
      <Areas shapes={FOREST} fill="#b1c29d" />
      <Areas shapes={CLEARING} fill="#f0ede4" />
      <Areas shapes={PITCH} fill="#d5ddd1" />
      <Areas shapes={WATER} fill="#90cccb" />
      <Areas shapes={LAND} fill="#f0ede4" />
      <Lines shapes={CREEK} color="#90cccb" width={7} />
      <Lines shapes={FERRY} color="#56a7a5" width={3.5} dash="18 9" />
      <Lines shapes={YELLOW} color="#dbdf97" width={7.5} />
      <Lines shapes={ORANGE} color="#ebcbb0" width={12} />
      <Lines shapes={TUNNEL} color="#bcb4c7" width={16} />
      <Lines shapes={RED} color="#d58f8d" width={13} />
      <Lines shapes={PURPLE} color="#a098b3" width={17} />
      <Areas shapes={HUBS} fill="#a098b3" />
      <Lines shapes={RAIL} color="#9b9b98" width={5} />
      <path d="M1600 1580L1650 1522" stroke="#9b9b98" strokeWidth="20" fill="none" />
      <Labels items={WATER_LABELS} color="#4d9a98" size={43} />
      <Labels items={PLACE_LABELS} color="#4b4946" size={45} />
      <g transform="translate(360 1272) rotate(22)" fill="#55524f" stroke="#f4f1ee" strokeOpacity={0.6} strokeWidth={6} paintOrder="stroke" fontSize={42} fontWeight={600}>
        <text textLength={298} lengthAdjust="spacingAndGlyphs">M4 East Tunnel</text>
      </g>
      <path
        transform="translate(2258 1348)"
        fill="#6e7f80"
        d="M0 -25q4 0 4 8v9l19 13v5l-19-6v11l6 5v4l-10-3-10 3v-4l6-5v-11l-19 6v-5l19-13v-9q0-8 4-8z"
      />
    </svg>
  );
}

function Marker() {
  return (
    <svg viewBox="0 0 62 52" className="absolute left-[360px] top-[302px] h-[52px] w-[62px]">
      <defs>
        <linearGradient id="pin" x1="0" y1="0" x2="0" y2="1">
          <stop offset="0" stopColor="#3f93d2" />
          <stop offset="1" stopColor="#1668c0" />
        </linearGradient>
        <filter id="soft" x="-30%" y="-30%" width="160%" height="160%">
          <feGaussianBlur stdDeviation="2.5" />
        </filter>
      </defs>
      <path d="M16 50L24 34Q34 24 43 30Q46 38 34 43Z" fill="#333" opacity="0.35" filter="url(#soft)" />
      <path d="M15.5 50L2.6 24.5Q.6 20.500 .6 16A14.900 14.900 0 0 1 30.400 16Q30.400 20.500 28.400 24.500Z" fill="url(#pin)" stroke="#2a6fae" strokeWidth="1" />
      <circle cx="15.500" cy="16" r="5.700" fill="#fff" />
    </svg>
  );
}

function ScrollArrow({ up, color }: { up?: boolean; color: string }) {
  return (
    <svg viewBox="0 0 10 5" className="h-[5px] w-[10px]" fill={color}>
      <path d={up ? "M0 5L5 0L10 5Z" : "M0 0L5 5L10 0Z"} />
    </svg>
  );
}

function RomaniaFlag() {
  return (
    <svg viewBox="0 0 20 15" className="h-[15px] w-5">
      <path d="M0 0h7v15H0z" fill="#00319c" />
      <path d="M6.700 0h6.700v15H6.700z" fill="#ffde00" />
      <path d="M13.400 0H20v15h-6.600z" fill="#de2110" />
    </svg>
  );
}

function RussiaFlag() {
  return (
    <svg viewBox="0 0 20 15" className="h-[15px] w-5">
      <path d="M0 0h20v5H0z" fill="#fff" />
      <path d="M0 5h20v5H0z" fill="#0039a6" />
      <path d="M0 10h20v5H0z" fill="#d52b1e" />
    </svg>
  );
}

function AustraliaFlag() {
  return (
    <svg viewBox="0 0 20 15" className="h-[15px] w-5">
      <path d="M0 0h20v15H0z" fill="#00008b" />
      <path d="M0 0l10 7.500M10 0L0 7.500" stroke="#fff" strokeWidth="1.800" />
      <path d="M0 0l10 7.500M10 0L0 7.500" stroke="#f00" strokeWidth=".8" />
      <path d="M5 0v7.500M0 3.750h10" stroke="#fff" strokeWidth="2.800" />
      <path d="M5 0v7.500M0 3.750h10" stroke="#f00" strokeWidth="1.500" />
      <g fill="#fff">
        <path d="M5 9.200l.7 1.400 1.500-.2-.8 1.300.8 1.300-1.500-.1L5 14.200l-.7-1.300-1.500.1.800-1.300-.8-1.300 1.500.2z" />
        <circle cx="15" cy="2.500" r=".9" />
        <circle cx="12.600" cy="6.500" r=".9" />
        <circle cx="17.600" cy="5.500" r=".9" />
        <circle cx="15" cy="12.300" r="1" />
        <circle cx="16.200" cy="8" r=".5" />
      </g>
    </svg>
  );
}

const BOOKMARKS = [
  { city: "Lisa", country: "Romania", Flag: RomaniaFlag, active: false },
  { city: "Sydney", country: "Australia", Flag: AustraliaFlag, active: true },
  { city: "Gayny", country: "Russian Federation (the)", Flag: RussiaFlag, active: false },
  { city: "Sinca Veche", country: "Romania", Flag: RomaniaFlag, active: false },
];

function Bullet() {
  return <span className="relative -top-[2px] text-[13px]">●</span>;
}

function Header() {
  return (
    <header className="flex h-24 items-center pl-[245px] text-[19px] tracking-[-0.1px] text-black">
      <a className="w-[125px] whitespace-nowrap pt-0.5 font-semibold tracking-normal text-[#4f46e5]">BookMarks</a>
      <div className="flex h-24 w-[1124px] shrink-0 items-center rounded-[30px] border border-[#e9e9ec] pl-[19px]">
        <MdLocationOn className="h-[30px] w-[30px] text-[#f43f5e]" />
        <span className="ml-[10px] w-[273px] font-['Liberation_Sans',sans-serif] text-[20px] tracking-normal text-[#757575]">
          Where to go?
        </span>
        <div className="h-[38px] w-px bg-[#94a3b8]" />
        <HiCalendar className="ml-[55px] h-[30px] w-[30px] text-[#4338ca]" />
        <span className="ml-[10px] w-[243px] whitespace-nowrap pt-px text-[18px] tracking-[-0.130px]">02/04/2025 to 02/21/2025</span>
        <div className="h-[38px] w-0.5 bg-[#94a3b8]" />
        <span className="ml-[54px] w-[265px] whitespace-nowrap pt-0.5 tracking-[-0.05px]">
          1 adult <Bullet /> 0 children <Bullet />1 room
        </span>
        <div className="h-[38px] w-px bg-[#94a3b8]" />
        <button className="ml-[55px] flex h-[54px] w-[54px] items-center justify-center rounded-[20px] bg-[#4f46e5]">
          <HiSearch className="h-[30px] w-[30px] text-white" />
        </button>
      </div>
      <span className="ml-[21px] w-[124px] whitespace-nowrap pt-0.5">ElnazFamkar</span>
      <svg viewBox="0 0 15 12" className="mb-1 h-3 w-[15px]" fill="none" stroke="#f00" strokeWidth="1.700" strokeLinecap="round" strokeLinejoin="round">
        <path d="M1.500 .9v10.200M4.800 6h8.500M10.800 3.500L13.500 6l-2.700 2.500" />
      </svg>
    </header>
  );
}

export default function App() {
  return (
    <div className="flex h-[869px] w-full overflow-hidden bg-white font-['Inter',sans-serif]">
      <div className="min-w-0 flex-1 pt-[22px]">
        <Header />
        <main className="flex pl-[200px] pt-5">
          <section className="w-[709px] shrink-0 text-black">
            <h2 className="mt-1 h-[54px] text-[29px] font-bold leading-8 tracking-[-0.250px]">Bookmark List</h2>
            <ul className="flex flex-col gap-5">
              {BOOKMARKS.map(({ city, country, Flag, active }) => (
                <li
                  key={city}
                  className={
                    active
                      ? "flex h-[71px] items-center justify-between rounded-[20px] border-2 border-[#4f46e5] bg-[#f1f5f9] px-5"
                      : "flex h-[69px] items-center justify-between rounded-[20px] border border-[#94a3b8] px-5"
                  }
                >
                  <div className="flex items-center text-[19px] tracking-[-0.050px]">
                    <div className="pt-[3px]">
                      <Flag />
                    </div>
                    <span className="ml-[10px] pt-0.5 font-semibold">{city}</span>
                    <span className="ml-[10px] pt-0.5">{country}</span>
                  </div>
                  <HiTrash className="mb-[6px] mr-px h-5 w-5 text-[#f43f5e]" />
                </li>
              ))}
            </ul>
          </section>
          <section className="ml-5 flex h-[707px] w-[771px] shrink-0">
            <div className="flex w-[21px] flex-col items-center justify-between bg-[#f0f0f0] py-[9px]">
              <ScrollArrow up color="#a3a3a3" />
              <ScrollArrow color="#a3a3a3" />
            </div>
            <div className="relative h-[707px] w-[750px] overflow-hidden">
              <CityMap />
              <Marker />
              <div className="absolute left-[12px] top-[12px] w-[42px] overflow-hidden rounded border-2 border-black/20 bg-clip-padding">
                <div className="flex h-[38px] items-center justify-center border-b border-[#ccc] bg-white pl-0.5">
                  <svg viewBox="0 0 16 16" className="h-4 w-4" stroke="#000" strokeWidth="2">
                    <path d="M0 8h16M8 0v16" />
                  </svg>
                </div>
                <div className="flex h-[38px] items-center justify-center bg-white pl-0.5">
                  <svg viewBox="0 0 16 16" className="h-4 w-4" stroke="#000" strokeWidth="2">
                    <path d="M0 8h16" />
                  </svg>
                </div>
              </div>
              <button className="absolute bottom-5 left-5 h-7 w-[137px] whitespace-nowrap rounded-[9px] bg-[#4f46e5] font-['Liberation_Sans',sans-serif] text-[14px] font-bold text-white shadow-[0_0_12px_#4f46e5]">
                Use your location
              </button>
              <div className="absolute bottom-0 right-0 flex h-[21px] w-[293px] items-center whitespace-nowrap bg-white/80 pl-[6px] font-['Liberation_Sans',sans-serif] text-[15px] tracking-[-0.02px] text-[#333]">
                <svg viewBox="0 0 15 10" className="mr-[5px] h-[10px] w-[15px]">
                  <path d="M0 0h15v5H0z" fill="#4c7be1" />
                  <path d="M0 5h15v5H0z" fill="#ffd500" />
                </svg>
                <span>
                  <span className="text-[#0078a8]">Leaflet</span> | © <span className="text-[#0078a8]">OpenStreetMap</span> contributors
                </span>
              </div>
            </div>
          </section>
        </main>
      </div>
      <div className="mt-[2px] flex w-5 flex-col items-center bg-[#f0f0f0]">
        <div className="flex h-[21px] items-center pt-1">
          <ScrollArrow up color="#a3a3a3" />
        </div>
        <div className="h-[727px] w-[17px] bg-[#c1c1c1]" />
        <div className="mt-auto pb-2">
          <ScrollArrow color="#505050" />
        </div>
      </div>
    </div>
  );
}
